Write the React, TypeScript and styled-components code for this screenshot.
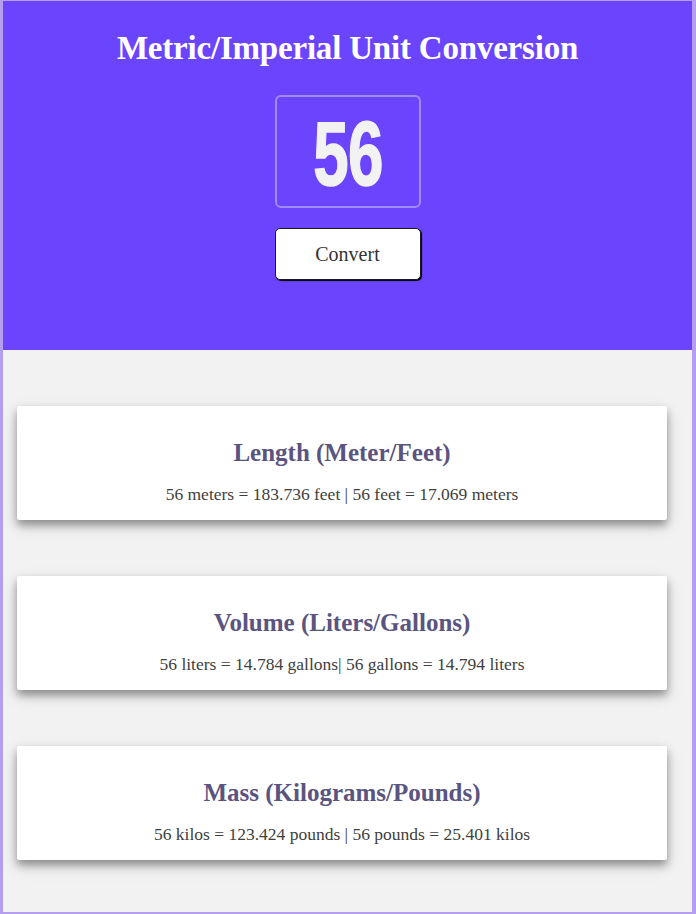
import React from "react";
import styled, { createGlobalStyle } from "styled-components";

const GlobalStyle = createGlobalStyle`
  html, body { margin: 0; padding: 0; background: #ffffff; }
  * { box-sizing: border-box; }
  body { font-family: "Liberation Serif", "Times New Roman", serif; }
`;

const Page = styled.div`
  width: 696px;
  height: 914px;
  border-style: solid;
  border-color: #b39ef0;
  border-width: 1px 4px 2px 3px;
  background: #f2f2f2;
  display: flex;
  flex-direction: column;
  overflow: hidden;
`;

const Header = styled.header`
  background: #6b45fd;
  height: 349px;
  padding-top: 28px;
  display: flex;
  flex-direction: column;
  align-items: center;
`;

const Title = styled.h1`
  margin: 0;
  font-family: "Liberation Serif", "Times New Roman", serif;
  font-weight: 700;
  font-size: 33px;
  line-height: 38px;
  letter-spacing: -0.2px;
  color: #ffffff;
`;

const InputFrame = styled.div`
  margin-top: 28px;
  width: 146px;
  height: 113px;
  border: 2px solid #a08cf6;
  border-radius: 6px;
  display: flex;
  align-items: center;
  justify-content: center;
  overflow: hidden;
`;

const NumberInput = styled.input`
  width: 180px;
  height: 100%;
  border: none;
  outline: none;
  background: transparent;
  text-align: center;
  font-family: "Liberation Sans", Arial, sans-serif;
  font-weight: 700;
  font-size: 91px;
  letter-spacing: -1px;
  color: #f2f2f2;
  -webkit-text-stroke: 1.5px #f2f2f2;
  padding: 5px 0 0;
  transform: scaleX(0.7);
  flex-shrink: 0;
`;

const ConvertButton = styled.button`
  margin-top: 20px;
  width: 146px;
  height: 52px;
  background: #ffffff;
  border: 1.5px solid #1a1a1a;
  border-radius: 5px;
  box-shadow: 1px 1px 1px #000;
  font-family: "Liberation Serif", "Times New Roman", serif;
  font-size: 20px;
  color: #333333;
  cursor: pointer;
`;

const Results = styled.main`
  padding: 56px 25px 0 14px;
  display: flex;
  flex-direction: column;
  gap: 56px;
`;

const Card = styled.section`
  background: #ffffff;
  height: 114px;
  border-radius: 2px;
  padding: 33px 0 16px;
  text-align: center;
  box-shadow: 0 5px 9px rgba(0, 0, 0, 0.36), 0 6px 18px rgba(0, 0, 0, 0.12);
`;

const CardTitle = styled.h2`
  margin: 0 0 17px;
  font-family: "Liberation Serif", "Times New Roman", serif;
  font-weight: 700;
  font-size: 25px;
  line-height: 28px;
  color: #5a5480;
`;

const CardText = styled.p`
  margin: 0;
  font-family: "Liberation Serif", "Times New Roman", serif;
  font-size: 17.5px;
  line-height: 20px;
  color: #404040;
`;

const conversions = [
  {
    title: "Length (Meter/Feet)",
    text: "56 meters = 183.736 feet | 56 feet = 17.069 meters",
  },
  {
    title: "Volume (Liters/Gallons)",
    text: "56 liters = 14.784 gallons| 56 gallons = 14.794 liters",
  },
  {
    title: "Mass (Kilograms/Pounds)",
    text: "56 kilos = 123.424 pounds | 56 pounds = 25.401 kilos",
  },
];

export default function App() {
  return (
    <>
      <GlobalStyle />
      <Page>
        <Header>
          <Title>Metric/Imperial Unit Conversion</Title>
          <InputFrame>
            <NumberInput type="text" defaultValue="56" />
          </InputFrame>
          <ConvertButton>Convert</ConvertButton>
        </Header>
        <Results>
          {conversions.map((c) => (
            <Card key={c.title}>
              <CardTitle>{c.title}</CardTitle>
              <CardText>{c.text}</CardText>
            </Card>
          ))}
        </Results>
      </Page>
    </>
  );
}
